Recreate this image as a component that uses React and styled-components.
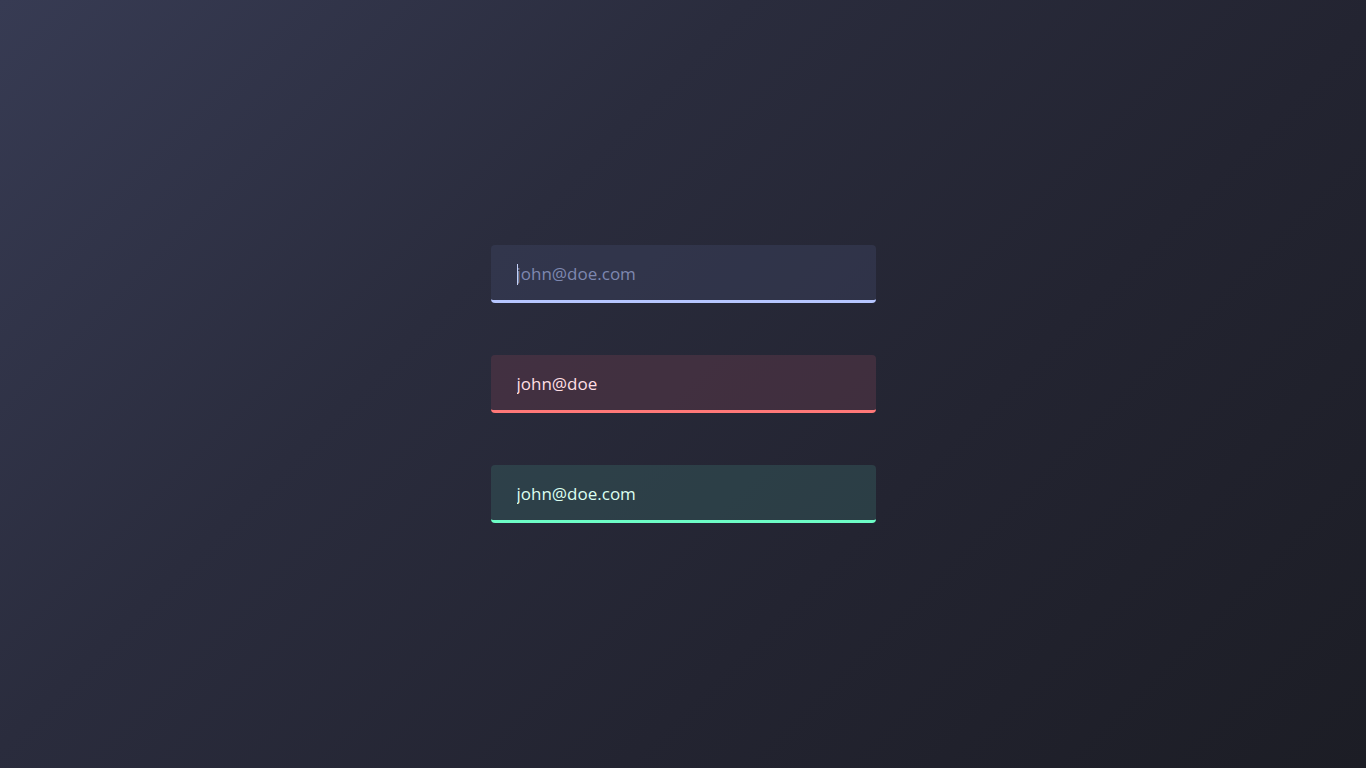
import React from "react";
import styled, {createGlobalStyle, css} from "styled-components";

const GlobalStyle = createGlobalStyle`
  html, body {
    margin: 0;
    height: 100%;
  }
  body {
    font-family: "Open Sans", "Noto Sans", sans-serif;
    background: linear-gradient(135deg, #373b53 0%, #2a2c3d 35%, #232431 65%, #1c1d25 100%);
  }
  #root {
    height: 100%;
  }
`

const Page = styled.main`
  min-height: 100vh;
  display: flex;
  flex-direction: column;
  align-items: center;
  justify-content: center;
  gap: 52px;
`

const variants = {
  focus: css`
    background: rgba(58, 63, 92, 0.5);
    border-bottom-color: #b6c6ff;
    color: #c9d2f2;
    caret-color: transparent;
  `,
  error: css`
    background: rgba(84, 54, 70, 0.6);
    border-bottom-color: #ff7878;
    color: #ffdfe4;
  `,
  success: css`
    background: rgba(52, 88, 90, 0.5);
    border-bottom-color: #6dfcc6;
    color: #dcfff1;
  `,
}

// the caret of the focused field, drawn so it shows in a still picture
const FieldWrap = styled.label`
  position: relative;
  display: block;

  ${({$caret}) => $caret && css`
    &::after {
      content: "";
      position: absolute;
      left: 26px;
      top: 19px;
      width: 1px;
      height: 21px;
      background: #c3cff7;
    }
  `}
`

const Field = styled.input`
  display: block;
  box-sizing: border-box;
  width: 385px;
  height: 58px;
  padding: 2px 26px 0;
  border: none;
  border-bottom: 3px solid transparent;
  border-radius: 4px;
  font-family: inherit;
  font-size: 17px;
  outline: none;
  ${({$state}) => variants[$state]}

  &::placeholder {
    color: #7e88b0;
  }
`

export default function App() {
    return (
        <>
            <GlobalStyle/>
            <Page>
                <FieldWrap $caret>
                    <Field $state="focus" placeholder="john@doe.com" autoFocus/>
                </FieldWrap>
                <FieldWrap>
                    <Field $state="error" defaultValue="john@doe"/>
                </FieldWrap>
                <FieldWrap>
                    <Field $state="success" defaultValue="john@doe.com"/>
                </FieldWrap>
            </Page>
        </>
    )
}
